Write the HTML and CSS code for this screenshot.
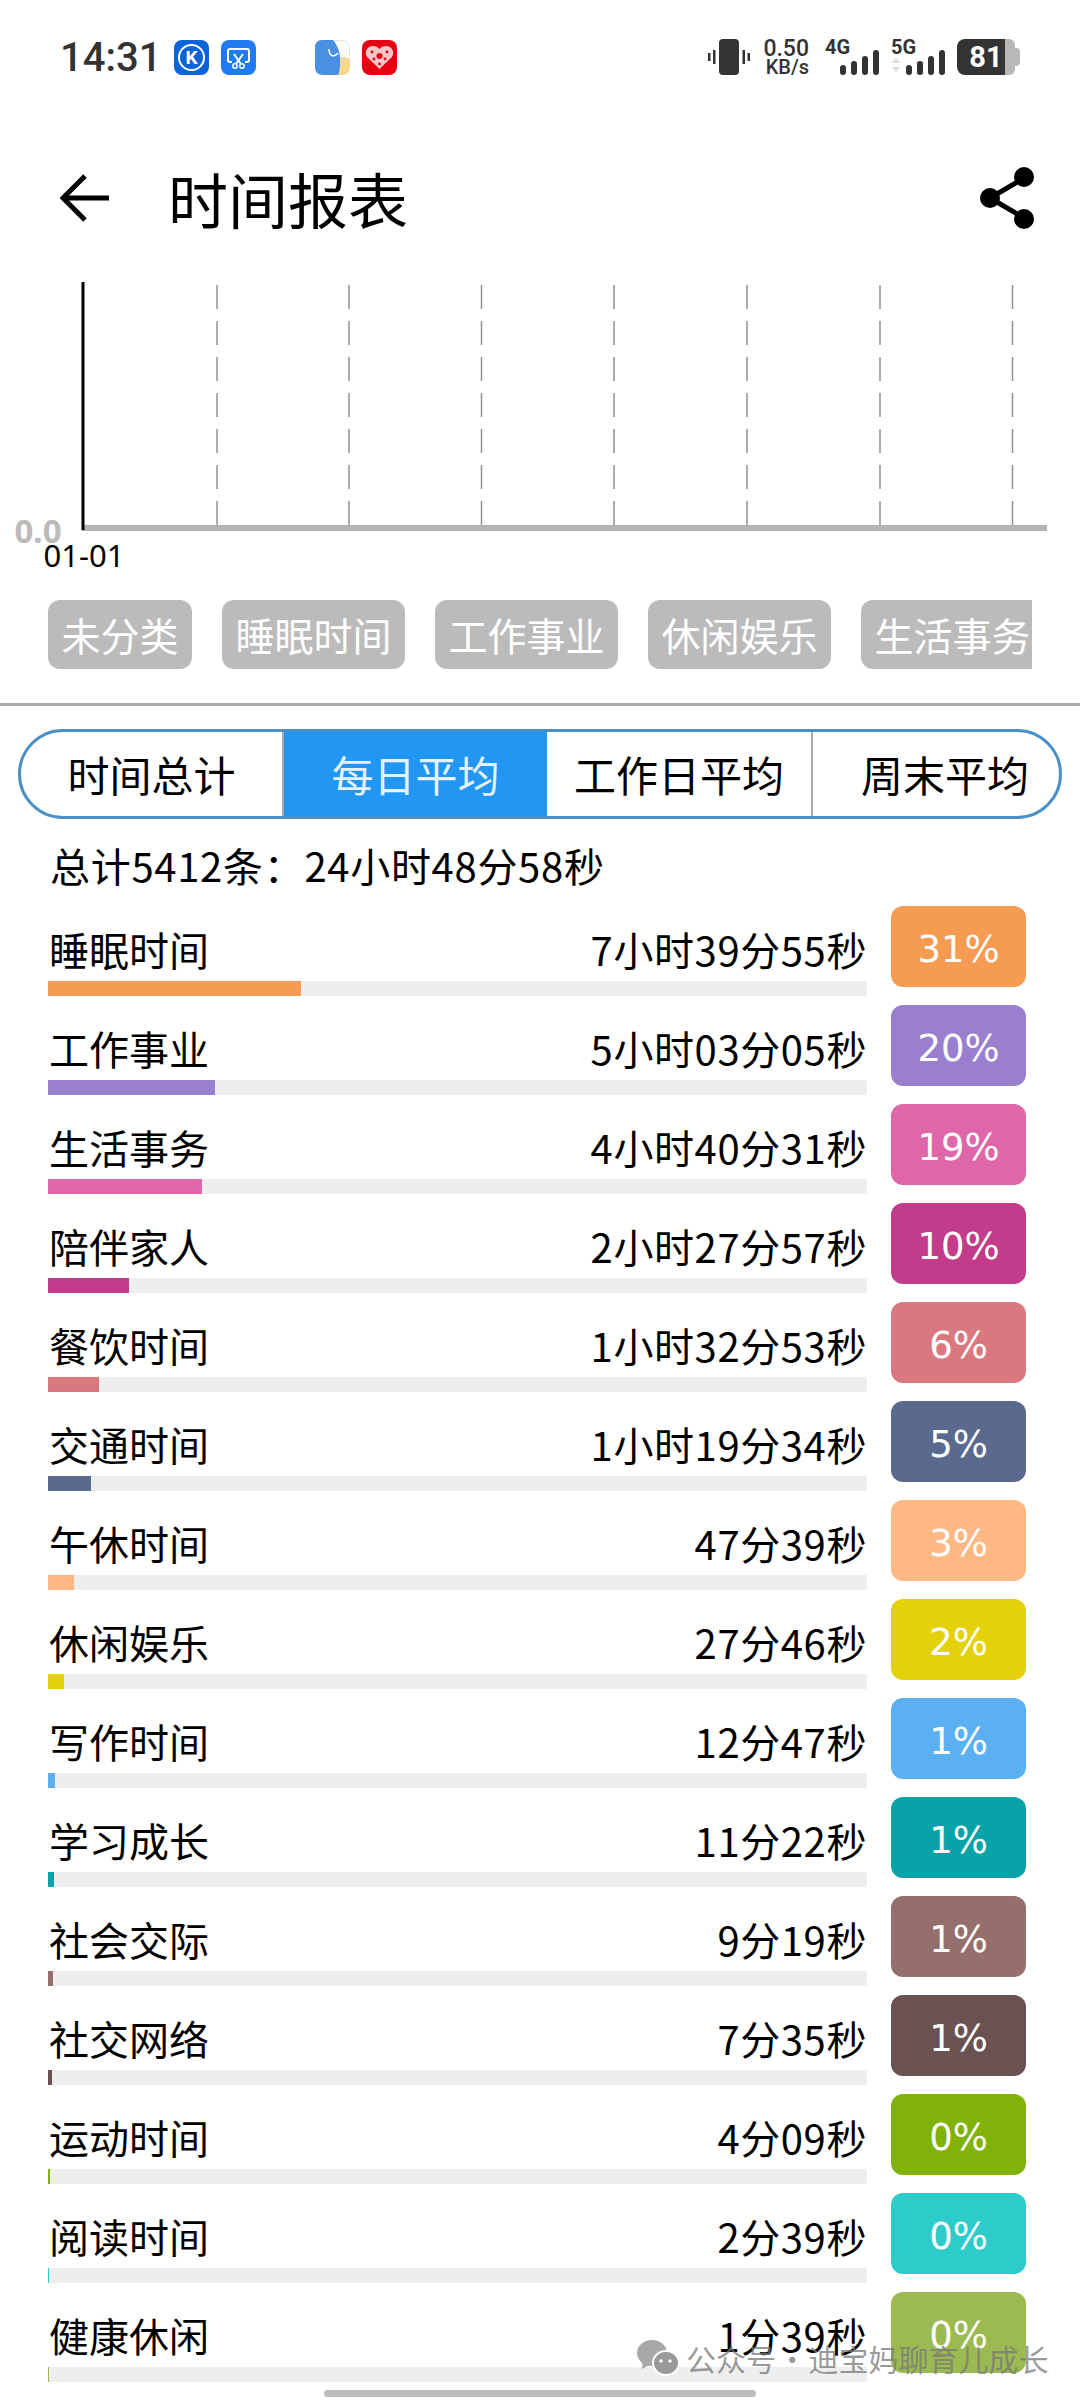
FILE: index.html
```html
<!DOCTYPE html>
<html lang="zh-CN">
<head>
    <meta charset="utf-8">
    <title>时间报表</title>
    <link rel="stylesheet" href="styles.css">
</head>
<body>
    <div class="page">
        <!-- status bar -->
        <div class="status">
            <div class="status-left">
                <span class="clock">14:31</span>
                <svg class="app-icon" viewBox="0 0 35 35">
                    <rect width="35" height="35" rx="8" fill="#0b63d8"/>
                    <circle cx="17.5" cy="17.5" r="12.5" fill="none" stroke="#fff" stroke-width="2"/>
                    <text x="17.5" y="24" text-anchor="middle" class="app-k">K</text>
                </svg>
                <svg class="app-icon" viewBox="0 0 35 35">
                    <rect width="35" height="35" rx="8" fill="#1f7cf0"/>
                    <path d="M11 22 H9 Q7 22 7 20 V11 Q7 9 9 9 H26 Q28 9 28 11 V20 Q28 22 26 22 H24" fill="none" stroke="#fff" stroke-width="2"/>
                    <path d="M13 14 L20 24 M22 14 L15 24" stroke="#fff" stroke-width="2"/>
                    <circle cx="14" cy="26" r="2.2" fill="none" stroke="#fff" stroke-width="1.5"/>
                    <circle cx="21" cy="26" r="2.2" fill="none" stroke="#fff" stroke-width="1.5"/>
                </svg>
                <svg class="app-icon app-gap" viewBox="0 0 35 35">
                    <rect x="0.500" y="0.500" width="34" height="34" rx="8" fill="#fbfbf8" stroke="#e6e6e0"/>
                    <path d="M22 18 C28 16 35 17 35 22 V27 C35 33 31 35 27 35 H20 Z" fill="#f5d78e"/>
                    <path d="M7 0 H18 C23 6 26 14 25 24 C25 29 24 33 23 35 H8 C3 35 0 32 0 27 V7 C0 3 3 0 7 0 Z" fill="#4a90e2"/>
                    <path d="M14 9 C14 16 19 18 23 13" fill="none" stroke="#fff" stroke-width="1.4"/>
                </svg>
                <svg class="app-icon" viewBox="0 0 35 35">
                    <rect width="35" height="35" rx="8" fill="#e60012"/>
                    <path d="M17.5 29 L5 17 C2 12 5 6 11 6 C14 6 16 7 17.5 9 C19 7 21 6 24 6 C30 6 33 12 30 17 Z" fill="#f7c6c9"/>
                    <circle cx="17.5" cy="16" r="3" fill="#e60012"/>
                    <circle cx="10" cy="12" r="1.4" fill="#e60012"/>
                    <circle cx="25" cy="12" r="1.4" fill="#e60012"/>
                    <circle cx="12" cy="19" r="1.4" fill="#e60012"/>
                    <circle cx="23" cy="19" r="1.4" fill="#e60012"/>
                    <circle cx="17.5" cy="24" r="1.4" fill="#e60012"/>
                </svg>
            </div>
            <div class="status-right">
                <svg class="vibrate" viewBox="0 0 42 36">
                    <rect x="11" y="0" width="20" height="36" rx="4" fill="#333"/>
                    <rect x="5" y="11" width="2.5" height="14" fill="#333"/>
                    <rect x="0" y="14" width="2.5" height="8" fill="#333"/>
                    <rect x="34.5" y="11" width="2.5" height="14" fill="#333"/>
                    <rect x="39.5" y="14" width="2.5" height="8" fill="#333"/>
                </svg>
                <div class="speed">
                    <span class="speed-num">0.50</span>
                    <span class="speed-unit">KB/s</span>
                </div>
                <div class="signal">
                    <span class="signal-name">4G</span>
                    <svg class="bars" viewBox="0 0 40 25">
                        <rect x="0" y="15" width="6" height="10" rx="3" fill="#333"/>
                        <rect x="11" y="11" width="6" height="14" rx="3" fill="#333"/>
                        <rect x="22" y="6" width="6" height="19" rx="3" fill="#333"/>
                        <rect x="33" y="0" width="6" height="25" rx="3" fill="#333"/>
                    </svg>
                </div>
                <div class="signal">
                    <span class="signal-name">5G</span>
                    <svg class="bars bars-wide" viewBox="0 0 54 25">
                        <path d="M0 13 L4 8 L8 13 Z M0 17 L8 17 L4 22 Z" fill="#ddd"/>
                        <rect x="14" y="15" width="6" height="10" rx="3" fill="#333"/>
                        <rect x="25" y="11" width="6" height="14" rx="3" fill="#333"/>
                        <rect x="36" y="6" width="6" height="19" rx="3" fill="#333"/>
                        <rect x="47" y="0" width="6" height="25" rx="3" fill="#333"/>
                    </svg>
                </div>
                <div class="battery"><span class="battery-num">81</span></div>
                <div class="battery-tip"></div>
            </div>
        </div>

        <!-- title -->
        <div class="header">
            <svg class="back" viewBox="0 0 50 48">
                <path d="M49 24 H4 M25 2 L3 24 L25 46" fill="none" stroke="#000" stroke-width="5"/>
            </svg>
            <h1 class="title">时间报表</h1>
            <svg class="share" viewBox="0 0 56 62">
                <path d="M45 11 L11 31 L45 51" fill="none" stroke="#000" stroke-width="5"/>
                <circle cx="45" cy="10" r="10" fill="#000"/>
                <circle cx="11" cy="31" r="10" fill="#000"/>
                <circle cx="45" cy="52" r="10" fill="#000"/>
            </svg>
        </div>

        <!-- chart -->
        <svg class="chart" viewBox="0 0 1080 300">
            <g class="grid-lines">
                <line x1="217" y1="3" x2="217" y2="243"/>
                <line x1="349" y1="3" x2="349" y2="243"/>
                <line x1="481.5" y1="3" x2="481.5" y2="243"/>
                <line x1="614" y1="3" x2="614" y2="243"/>
                <line x1="747" y1="3" x2="747" y2="243"/>
                <line x1="880" y1="3" x2="880" y2="243"/>
                <line x1="1012.5" y1="3" x2="1012.5" y2="243"/>
            </g>
            <rect x="82" y="243" width="965" height="6" fill="#b5b5b5"/>
            <rect x="81.500" y="0" width="3" height="248" fill="#000"/>
            <text x="38" y="261" text-anchor="middle" class="chart-y">0.0</text>
            <text x="84" y="285" text-anchor="middle" class="chart-x">01-01</text>
        </svg>

        <div class="chips">
            <span class="chip">未分类</span>
            <span class="chip">睡眠时间</span>
            <span class="chip">工作事业</span>
            <span class="chip">休闲娱乐</span>
            <span class="chip">生活事务</span>
        </div>

        <div class="divider"></div>

        <div class="tabs">
            <div class="tab">时间总计</div>
            <div class="tab tab-active">每日平均</div>
            <div class="tab">工作日平均</div>
            <div class="tab tab-last">周末平均</div>
        </div>

        <p class="summary">总计5412条：24小时48分58秒</p>

        <div class="list">
            <div class="row cat-sleep">
                <div class="row-main">
                    <div class="row-text"><span>睡眠时间</span><span class="row-value">7小时39分55秒</span></div>
                    <div class="track"><div class="fill" style="width:30.9%"></div></div>
                </div>
                <div class="badge">31%</div>
            </div>
            <div class="row cat-work">
                <div class="row-main">
                    <div class="row-text"><span>工作事业</span><span class="row-value">5小时03分05秒</span></div>
                    <div class="track"><div class="fill" style="width:20.4%"></div></div>
                </div>
                <div class="badge">20%</div>
            </div>
            <div class="row cat-life">
                <div class="row-main">
                    <div class="row-text"><span>生活事务</span><span class="row-value">4小时40分31秒</span></div>
                    <div class="track"><div class="fill" style="width:18.8%"></div></div>
                </div>
                <div class="badge">19%</div>
            </div>
            <div class="row cat-family">
                <div class="row-main">
                    <div class="row-text"><span>陪伴家人</span><span class="row-value">2小时27分57秒</span></div>
                    <div class="track"><div class="fill" style="width:9.9%"></div></div>
                </div>
                <div class="badge">10%</div>
            </div>
            <div class="row cat-meal">
                <div class="row-main">
                    <div class="row-text"><span>餐饮时间</span><span class="row-value">1小时32分53秒</span></div>
                    <div class="track"><div class="fill" style="width:6.2%"></div></div>
                </div>
                <div class="badge">6%</div>
            </div>
            <div class="row cat-traffic">
                <div class="row-main">
                    <div class="row-text"><span>交通时间</span><span class="row-value">1小时19分34秒</span></div>
                    <div class="track"><div class="fill" style="width:5.3%"></div></div>
                </div>
                <div class="badge">5%</div>
            </div>
            <div class="row cat-nap">
                <div class="row-main">
                    <div class="row-text"><span>午休时间</span><span class="row-value">47分39秒</span></div>
                    <div class="track"><div class="fill" style="width:3.2%"></div></div>
                </div>
                <div class="badge">3%</div>
            </div>
            <div class="row cat-fun">
                <div class="row-main">
                    <div class="row-text"><span>休闲娱乐</span><span class="row-value">27分46秒</span></div>
                    <div class="track"><div class="fill" style="width:1.9%"></div></div>
                </div>
                <div class="badge">2%</div>
            </div>
            <div class="row cat-write">
                <div class="row-main">
                    <div class="row-text"><span>写作时间</span><span class="row-value">12分47秒</span></div>
                    <div class="track"><div class="fill" style="width:0.86%"></div></div>
                </div>
                <div class="badge">1%</div>
            </div>
            <div class="row cat-study">
                <div class="row-main">
                    <div class="row-text"><span>学习成长</span><span class="row-value">11分22秒</span></div>
                    <div class="track"><div class="fill" style="width:0.76%"></div></div>
                </div>
                <div class="badge">1%</div>
            </div>
            <div class="row cat-social">
                <div class="row-main">
                    <div class="row-text"><span>社会交际</span><span class="row-value">9分19秒</span></div>
                    <div class="track"><div class="fill" style="width:0.63%"></div></div>
                </div>
                <div class="badge">1%</div>
            </div>
            <div class="row cat-net">
                <div class="row-main">
                    <div class="row-text"><span>社交网络</span><span class="row-value">7分35秒</span></div>
                    <div class="track"><div class="fill" style="width:0.51%"></div></div>
                </div>
                <div class="badge">1%</div>
            </div>
            <div class="row cat-sport">
                <div class="row-main">
                    <div class="row-text"><span>运动时间</span><span class="row-value">4分09秒</span></div>
                    <div class="track"><div class="fill" style="width:0.28%"></div></div>
                </div>
                <div class="badge">0%</div>
            </div>
            <div class="row cat-read">
                <div class="row-main">
                    <div class="row-text"><span>阅读时间</span><span class="row-value">2分39秒</span></div>
                    <div class="track"><div class="fill" style="width:0.18%"></div></div>
                </div>
                <div class="badge">0%</div>
            </div>
            <div class="row cat-health">
                <div class="row-main">
                    <div class="row-text"><span>健康休闲</span><span class="row-value">1分39秒</span></div>
                    <div class="track"><div class="fill" style="width:0.11%"></div></div>
                </div>
                <div class="badge">0%</div>
            </div>
        </div>

        <!-- watermark and gesture bar lie over the list -->
        <div class="watermark">
            <svg class="wechat" viewBox="0 0 42 36">
                <ellipse cx="15" cy="13" rx="15" ry="13" fill="#a8a8a8"/>
                <path d="M6 20 L5 29 L14 24 Z" fill="#a8a8a8"/>
                <ellipse cx="29" cy="23" rx="13" ry="12" fill="#9a9a9a" stroke="#fff" stroke-width="2"/>
                <circle cx="24" cy="21" r="1.800" fill="#fff"/>
                <circle cx="33" cy="21" r="1.800" fill="#fff"/>
            </svg>
            <span>公众号 · 迪宝妈聊育儿成长</span>
        </div>
        <div class="home-bar"></div>
    </div>
</body>
</html>
```

FILE: styles.css
```css
/* General */
* {
    margin: 0;
    padding: 0;
    box-sizing: border-box;
}

body {
    background: #fff;
    color: #000;
    font-family: "Noto Sans CJK SC", "Noto Sans", sans-serif;
}

.page {
    position: relative;
    width: 1080px;
    height: 2400px;
    overflow: hidden;
}

/* Status bar */
.status {
    display: flex;
    justify-content: space-between;
    align-items: center;
    height: 114px;
    padding: 0 60px 0 60px;
}

.status-left,
.status-right {
    display: flex;
    align-items: center;
}

.clock {
    width: 114px;
    font-family: Roboto, sans-serif;
    font-size: 40px;
    font-weight: 500;
    color: #333;
}

.app-icon {
    width: 35px;
    height: 35px;
    margin-right: 12px;
}

.app-gap {
    margin-left: 47px;
}

.app-k {
    font-family: Roboto, sans-serif;
    font-size: 19px;
    font-weight: 700;
    fill: #fff;
}

.vibrate {
    width: 42px;
    height: 36px;
    margin-right: 14px;
}

.speed {
    display: flex;
    flex-direction: column;
    align-items: flex-end;
    width: 45px;
    margin-right: 16px;
    font-family: Roboto, sans-serif;
    font-weight: 500;
    color: #333;
}

.speed-num {
    font-size: 23px;
    line-height: 21px;
}

.speed-unit {
    font-size: 20px;
    line-height: 17px;
}

.signal {
    position: relative;
    display: flex;
    justify-content: flex-end;
    width: 55px;
    height: 36px;
    margin-right: 11px;
}

.signal-name {
    position: absolute;
    left: 0;
    top: -2px;
    font-family: Roboto, sans-serif;
    font-size: 20px;
    font-weight: 700;
    color: #333;
    line-height: 20px;
}

.bars {
    width: 40px;
    height: 25px;
    margin-top: 11px;
}

.bars-wide {
    width: 54px;
}

.battery {
    display: flex;
    align-items: center;
    width: 58px;
    height: 36px;
    border-radius: 8px 6px 6px 8px;
    background: linear-gradient(to right, #333 0, #333 48px, #b8b8b8 48px);
}

.battery-tip {
    width: 5px;
    height: 18px;
    border-radius: 0 4px 4px 0;
    background: #b8b8b8;
}

.battery-num {
    width: 48px;
    padding-left: 10px;
    text-align: center;
    font-family: Roboto, sans-serif;
    font-size: 29px;
    font-weight: 700;
    color: #fff;
}

/* Title */
.header {
    display: flex;
    align-items: center;
    height: 168px;
    padding: 0 45px 0 60px;
}

.back {
    width: 50px;
    height: 48px;
}

.title {
    flex: 1;
    margin-left: 58px;
    font-size: 60px;
    font-weight: 400;
    line-height: 70px;
}

.share {
    width: 56px;
    height: 62px;
}

/* Chart */
.chart {
    display: block;
    width: 1080px;
    height: 300px;
}

.grid-lines line {
    stroke: #8a9499;
    stroke-width: 1.5;
    stroke-dasharray: 24 12;
}

.chart-y {
    font-family: "Noto Sans", sans-serif;
    font-size: 33px;
    font-weight: 700;
    fill: #bbb;
}

.chart-x {
    font-family: "Noto Sans", sans-serif;
    font-size: 31px;
    fill: #000;
}

/* Category chips */
.chips {
    display: flex;
    gap: 30px;
    width: 984px;
    margin: 18px 0 34px 48px;
    overflow: hidden;
}

.chip {
    flex-shrink: 0;
    height: 69px;
    padding: 0 13.5px;
    border-radius: 12px;
    background: #bbb;
    color: #fff;
    font-size: 39px;
    line-height: 69px;
}

.divider {
    height: 3px;
    background: #aaa;
}

/* Tabs */
.tabs {
    display: grid;
    grid-template-columns: 263px 263px 266px 1fr;
    width: 1044px;
    height: 90px;
    margin: 23px 0 0 18px;
    border: 3px solid #4a90c4;
    border-radius: 45px;
    overflow: hidden;
}

.tab {
    border-right: 2px solid #aaa;
    font-size: 42px;
    line-height: 84px;
    text-align: center;
}

.tab-active {
    border-right: 0;
    background: #2196f3;
    color: #e3f2fd;
}

.tab-last {
    border-right: 0;
    padding-left: 18px;
}

.summary {
    margin: 21px 0 15px 50px;
    font-size: 40px;
    letter-spacing: 0.7px;
    line-height: 51px;
}

/* Rows */
.row {
    display: flex;
    gap: 24px;
    height: 99px;
    padding-left: 48px;
}

.row-main {
    display: flex;
    flex-direction: column;
    justify-content: flex-end;
    width: 819px;
    height: 90px;
}

.row-text {
    display: flex;
    justify-content: space-between;
    padding-left: 1px;
    margin-bottom: 6px;
    font-size: 40px;
    line-height: 52px;
}

.row-value {
    letter-spacing: 0.6px;
}

.track {
    height: 15px;
    background: #eee;
}

.fill {
    height: 100%;
    background: var(--cat);
}

.badge {
    width: 135px;
    height: 81px;
    border-radius: 12px;
    background: var(--cat);
    color: #fff;
    font-family: "DejaVu Sans", sans-serif;
    font-size: 37px;
    line-height: 87px;
    text-align: center;
}

.cat-sleep { --cat: #f59b52; }
.cat-work { --cat: #9b7fcf; }
.cat-life { --cat: #df66a8; }
.cat-family { --cat: #c23c8b; }
.cat-meal { --cat: #d9797f; }
.cat-traffic { --cat: #5a6a8f; }
.cat-nap { --cat: #ffb884; }
.cat-fun { --cat: #e3d10a; }
.cat-write { --cat: #5ab0f0; }
.cat-study { --cat: #08a3a8; }
.cat-social { --cat: #956f6b; }
.cat-net { --cat: #6b5252; }
.cat-sport { --cat: #80b20a; }
.cat-read { --cat: #2ecbcb; }
.cat-health { --cat: #9cba52; }

/* Overlays */
.watermark {
    position: absolute;
    left: 637px;
    top: 2340px;
    display: flex;
    align-items: center;
    gap: 7px;
    color: rgba(120, 120, 120, 0.75);
    font-size: 30px;
    word-spacing: -5.5px;
    line-height: 36px;
    white-space: nowrap;
}

.wechat {
    width: 42px;
    height: 36px;
}

.home-bar {
    position: absolute;
    left: 324px;
    top: 2390px;
    width: 432px;
    height: 7px;
    border-radius: 4px;
    background: #bbb;
}
```
